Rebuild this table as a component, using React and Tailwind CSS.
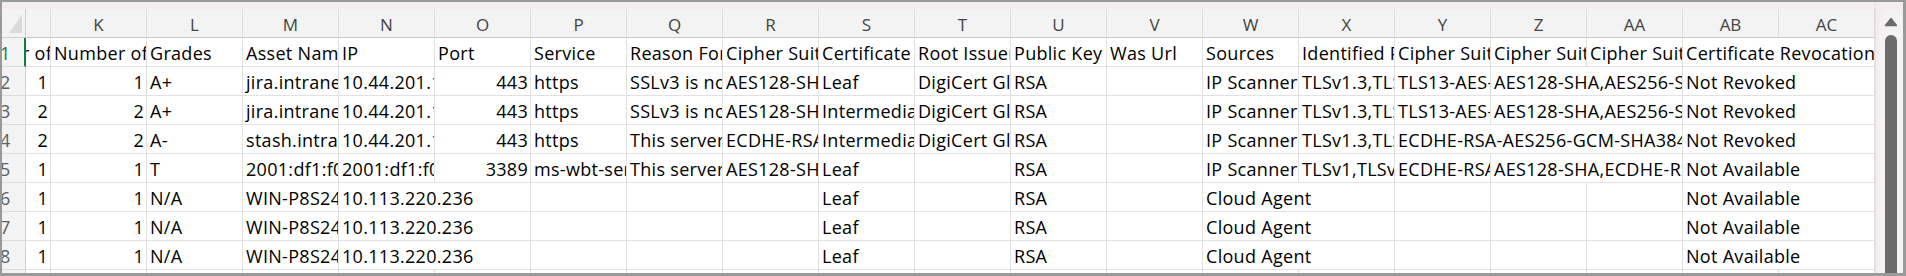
import React from "react";

const LETTERS = ["J","K","L","M","N","O","P","Q","R","S","T","U","V","W","X","Y","Z","AA","AB","AC"];

const W = { 1: "w-[96px]", 2: "w-[192px]", 3: "w-[288px]" };

const L = (t, s = 1) => ({ t, a: "l", s });
const R = (t) => ({ t, a: "r", s: 1 });
const E = { t: "", a: "l", s: 1 };

const header = [
  L("Number of Assets"), L("Number of Findings"), L("Grades"), L("Asset Name"), L("IP"), L("Port"),
  L("Service"), L("Reason For Grade"), L("Cipher Suites"), L("Certificate Type"), L("Root Issuer"),
  L("Public Key Algorithm"), L("Was Url"), L("Sources"), L("Identified Protocols"),
  L("Cipher Suites TLS 1.3"), L("Cipher Suites TLS 1.2"), L("Cipher Suites TLS 1.1"),
  L("Certificate Revocation Status", 2),
];

const agentRow = [
  R("1"), R("1"), L("N/A"), L("WIN-P8S24LQ7"), L("10.113.220.236", 2), E, E, E, L("Leaf"), E, L("RSA"), E,
  L("Cloud Agent", 2), E, E, E, L("Not Available", 2),
];

const rows = [
  header,
  [
    R("1"), R("1"), L("A+"), L("jira.intranet.example.com"), L("10.44.201.15"), R("443"), L("https"),
    L("SSLv3 is not supported"), L("AES128-SHA,AES256-SHA"), L("Leaf"), L("DigiCert Global G2 TLS RSA"),
    L("RSA"), E, L("IP Scanner"), L("TLSv1.3,TLSv1.2"), L("TLS13-AES-128-GCM-SHA256"),
    L("AES128-SHA,AES256-SHA,ECDHE", 2), L("Not Revoked", 2),
  ],
  [
    R("2"), R("2"), L("A+"), L("jira.intranet.example.com"), L("10.44.201.15"), R("443"), L("https"),
    L("SSLv3 is not supported"), L("AES128-SHA,AES256-SHA"), L("Intermediate"), L("DigiCert Global G2 TLS RSA"),
    L("RSA"), E, L("IP Scanner"), L("TLSv1.3,TLSv1.2"), L("TLS13-AES-128-GCM-SHA256"),
    L("AES128-SHA,AES256-SHA,ECDHE", 2), L("Not Revoked", 2),
  ],
  [
    R("2"), R("2"), L("A-"), L("stash.intranet.example.com"), L("10.44.201.18"), R("443"), L("https"),
    L("This server supports weak ciphers"), L("ECDHE-RSA-AES256-GCM"), L("Intermediate"),
    L("DigiCert Global G2 TLS RSA"), L("RSA"), E, L("IP Scanner"), L("TLSv1.3,TLSv1.2"),
    L("ECDHE-RSA-AES256-GCM-SHA384,ECDHE-RSA", 3), L("Not Revoked", 2),
  ],
  [
    R("1"), R("1"), L("T"), L("2001:df1:f00d::15"), L("2001:df1:f00d::15"), R("3389"), L("ms-wbt-server"),
    L("This server's certificate is not trusted"), L("AES128-SHA,AES256-SHA"), L("Leaf"), E, L("RSA"), E,
    L("IP Scanner"), L("TLSv1,TLSv1.1,TLSv1.2"), L("ECDHE-RSA-AES128-SHA"),
    L("AES128-SHA,ECDHE-RSA-AES256", 2), L("Not Available", 2),
  ],
  agentRow,
  agentRow,
  agentRow,
  [E, E, E, E, E, E, E, E, E, E, E, E, E, E, E, E, E, E, E, E],
];

function Cell({ c }) {
  return (
    <div
      className={`${W[c.s]} shrink-0 h-[29px] border-r border-b border-[#e1e1e1] overflow-hidden whitespace-nowrap flex items-end pb-[1px] ${
        c.a === "r" ? "justify-end pr-[2px]" : "justify-start pl-[3px]"
      }`}
    >
      <span className="leading-[24px] tracking-[0.3px]">{c.t}</span>
    </div>
  );
}

export default function App() {
  return (
    <div className="w-[1906px] h-[276px] border-t-2 border-l-2 border-r-[3px] border-b-[3px] border-[#9a9a9a] bg-[#f4edef] flex font-['Open_Sans',sans-serif] text-[18px] text-black overflow-hidden">
      <div className="w-[1873px] shrink-0 flex flex-col pt-[7px] overflow-hidden">
        {/* column letters */}
        <div className="flex bg-[#f3f3f3] h-[29px] shrink-0">
          <div className="w-[24px] shrink-0 h-[29px] border-r border-b border-[#cfcfcf] flex items-end justify-end pb-[3px] pr-[2px]">
            <svg width="16" height="20" viewBox="0 0 16 20">
              <polygon points="2,19 15,19 15,1" fill="#dadada" />
            </svg>
          </div>
          <div className="w-[1849px] overflow-hidden">
            <div className="flex ml-[-71px]">
              {LETTERS.map((l) => (
                <div
                  key={l}
                  className="w-[96px] shrink-0 h-[29px] border-r border-r-[#dcdcdc] border-b border-b-[#c8c8c8] flex items-end justify-center text-[17px] text-[#444]"
                >
                  <span className="leading-[24px]">{l}</span>
                </div>
              ))}
            </div>
          </div>
        </div>
        {rows.map((row, i) => (
          <div key={i} className="flex bg-white h-[29px] shrink-0">
            <div
              className={`w-[24px] shrink-0 h-[29px] bg-[#f3f3f3] border-b border-b-[#dcdcdc] overflow-hidden whitespace-nowrap flex items-end pb-[1px] ${
                i === 0 ? "border-r-2 border-r-[#107c41] text-[#107c41]" : "border-r border-r-[#cfcfcf] text-[#5f5f5f]"
              }`}
            >
              <span className="leading-[24px] ml-[-2px]">{i + 1}</span>
            </div>
            <div className="w-[1849px] overflow-hidden">
              <div className="flex ml-[-71px]">
                {row.map((c, j) => (
                  <Cell key={j} c={c} />
                ))}
              </div>
            </div>
          </div>
        ))}
      </div>
      {/* vertical scrollbar */}
      <div className="w-[28px] shrink-0 flex flex-col pt-[8px] pl-[3px] border-l border-[#e4e4e4]">
        <div className="flex-1 bg-[#f3f3f3] rounded-t-[12px] flex flex-col items-center pt-[7px]">
          <svg width="14" height="10" viewBox="0 0 14 10">
            <polygon points="7,1.5 12.5,8.5 1.5,8.5" fill="#6b6b6b" stroke="#6b6b6b" strokeWidth="1.5" strokeLinejoin="round" />
          </svg>
          <div className="w-[12px] flex-1 mt-[8px] bg-[#6b6b6b] rounded-t-full" />
        </div>
      </div>
    </div>
  );
}
